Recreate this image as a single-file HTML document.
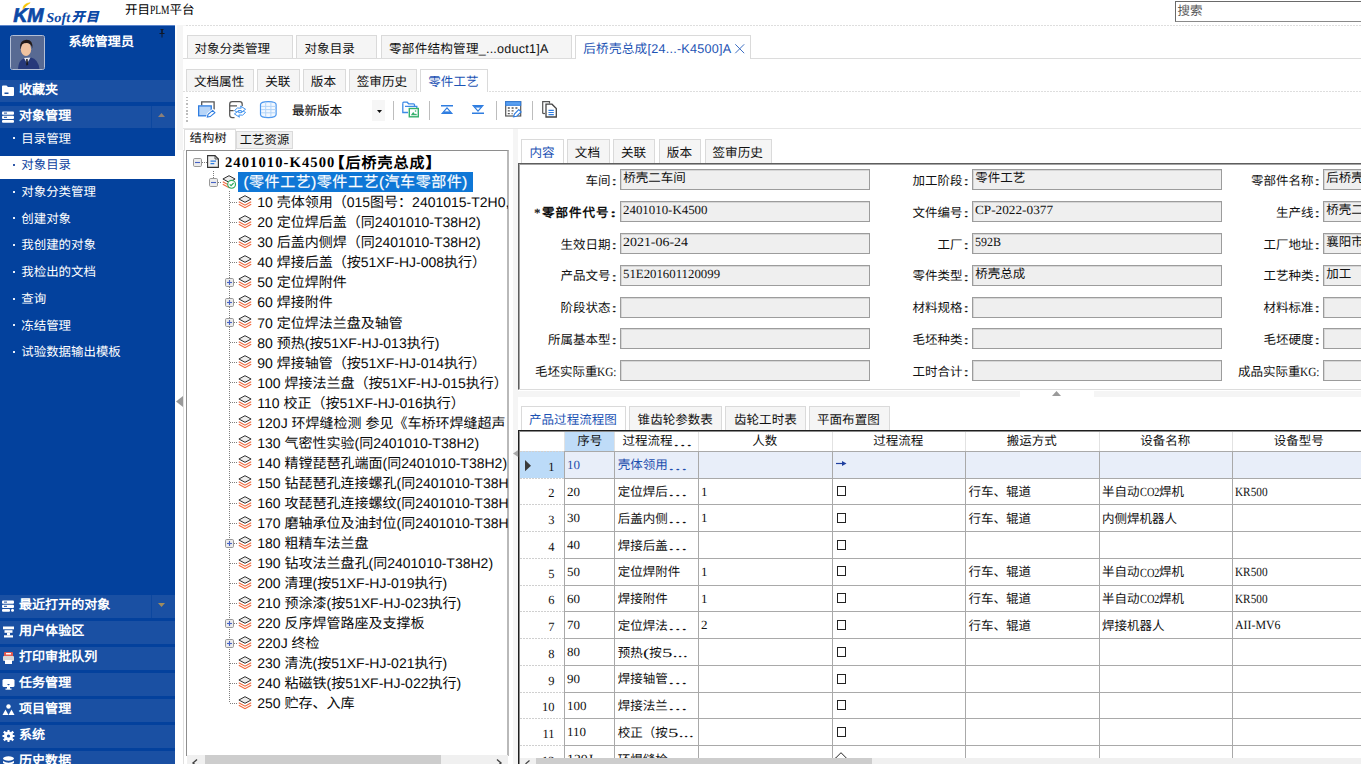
<!DOCTYPE html>
<html lang="zh-CN"><head><meta charset="utf-8"><title>开目PLM平台</title><style>
html,body{margin:0;padding:0;width:1361px;height:764px;overflow:hidden;}
#app{position:absolute;left:0;top:0;width:1361px;height:764px;overflow:hidden;background:#fff;}
body{background:#fff;position:relative;font-family:"Liberation Sans",sans-serif;color:#000;text-rendering:geometricPrecision;}
.a{position:absolute;white-space:nowrap;line-height:1;}
.b{position:absolute;box-sizing:border-box;}
.ser{font-family:"Liberation Sans",sans-serif;}
.lat{font-family:"Liberation Serif","Liberation Sans",serif;}
.nx{font-family:"Liberation Serif","Liberation Sans",serif;display:inline-block;transform-origin:0 50%;position:relative;top:0.3px;}
.sb{color:#fff;font-size:12.45px;}
.sbh{color:#fff;font-size:13px;font-weight:bold;}
.tab{position:absolute;box-sizing:border-box;background:#f5f5f5;border:1px solid #dadada;border-bottom:none;}
.inp{position:absolute;box-sizing:border-box;background:#efefef;border:1px solid #9c9c9c;box-shadow:inset 1px 1px 0 #d6d6d6;}
svg{position:absolute;overflow:visible;}
</style></head><body><div id="app">
<div class="b" style="left:183px;top:25px;width:1178px;height:1px;background:repeating-linear-gradient(90deg,#dedede 0 2px,transparent 2px 3px)"></div>
<svg style="left:12px;top:0px" width="92" height="24" viewBox="0 0 92 24"><path d="M18.2 2.7 Q10.6 3.6 10.9 9.6 Q13.8 5.6 18.2 2.7Z" fill="#f7c500" stroke="#f7c500" stroke-width="0.6"/><text x="1.2" y="21.8" font-family="Liberation Sans" font-weight="bold" font-style="italic" font-size="20" fill="#0c49a6" stroke="#0c49a6" stroke-width="0.7" textLength="30.5" lengthAdjust="spacingAndGlyphs">KM</text><text x="34.3" y="21.8" font-family="Liberation Serif" font-weight="bold" font-style="italic" font-size="13.5" fill="#0c49a6" textLength="24" lengthAdjust="spacingAndGlyphs">Soft</text><text x="60" y="21.3" font-family="Liberation Sans" font-weight="bold" font-style="italic" font-size="12.5" fill="#0c49a6" stroke="#0c49a6" stroke-width="0.3" textLength="26.5" lengthAdjust="spacing">开目</text></svg>
<div class="a ser" style="left:125.00px;top:3.55px;font-size:12.5px;">开目<span class="nx" style="transform:scaleX(0.759);margin-right:-6.20px">PLM</span>平台</div>
<div class="b" style="left:1175px;top:1px;width:190px;height:21px;border:1px solid #6a6a6a;border-bottom-color:#8a8a8a;background:#fff"></div>
<div class="a " style="left:1177.50px;top:4.65px;font-size:12.5px;color:#5a5a5a">搜索</div>
<div class="b" style="left:0px;top:25px;width:175px;height:739px;background:#03419d"></div>
<div class="b" style="left:0px;top:25px;width:175px;height:1px;background:#5d86cb"></div>
<div class="b" style="left:10px;top:35px;width:35px;height:35px;background:#5a6b94;border:1px solid #b4bfd6;border-radius:2.5px"></div>
<svg style="left:11px;top:36px" width="33" height="33" viewBox="0 0 33 33"><rect width="33" height="33" rx="1.5" fill="#586a93"/><path d="M7 33 Q7.5 24 13 22.5 L20 21.5 Q27 23 28.5 33Z" fill="#27397a"/><path d="M13 22 L16 27.5 L19.5 21.5Z" fill="#e9e9f0"/><path d="M15.2 23 L16.6 23 L17.2 29 L15.2 29.5Z" fill="#1a1a22"/><ellipse cx="15" cy="13.2" rx="5.2" ry="6.9" fill="#efc3a0"/><path d="M9.3 12 Q8.5 4.2 15.5 3.8 Q22.3 4 21.3 12.5 Q20.5 8 17.5 7.2 Q13 6.8 11 8.5 Q10 10 9.8 13.5Z" fill="#231a17"/></svg>
<div class="a sbh" style="left:68.50px;top:34.72px;font-size:13px;letter-spacing:0.1px">系统管理员</div>
<svg style="left:159px;top:29px" width="6" height="9" viewBox="0 0 6 9"><path d="M1.5 0h3v1h-.7v3h1.7v1h-5v-1h1.7v-3h-.7zM2.5 5h1v3.5h-1z" fill="#101828"/></svg>
<div class="b" style="left:0px;top:80px;width:175px;height:22px;background:#1a50a3"></div>
<svg style="left:1.6px;top:84px" width="13" height="13" viewBox="0 0 13 13"><path d="M0 2.5Q0 1.5 1 1.5H4.5L6 3H11Q12 3 12 4V11Q12 12 11 12H1Q0 12 0 11Z" fill="#fff"/><rect x="2.5" y="8.5" width="4" height="1.5" fill="#1a50a3"/></svg>
<div class="a sbh" style="left:19.00px;top:82.82px;font-size:13px;letter-spacing:0.05px">收藏夹</div>
<div class="b" style="left:0px;top:105.5px;width:175px;height:22.5px;background:#1a50a3"></div>
<div class="b" style="left:151px;top:105.5px;width:1px;height:22.5px;background:#03419d;opacity:.6"></div>
<svg style="left:158px;top:112.8px" width="7" height="4" viewBox="0 0 7 4"><path d="M0 4L3.5 0L7 4Z" fill="#8c8078"/></svg>
<svg style="left:1.6px;top:109.5px" width="13" height="13" viewBox="0 0 13 13"><rect x="0" y="1.5" width="12" height="3.2" rx="1" fill="#fff"/><rect x="0" y="5.7" width="12" height="3.2" rx="1" fill="#fff"/><rect x="0" y="9.9" width="12" height="2.8" rx="1" fill="#fff"/><rect x="2" y="2.6" width="3" height="1" fill="#1a50a3"/><rect x="2" y="6.8" width="3" height="1" fill="#1a50a3"/></svg>
<div class="a sbh" style="left:19.00px;top:108.57px;font-size:13px;letter-spacing:0.05px">对象管理</div>
<div class="b" style="left:13px;top:137px;width:2px;height:2px;background:#e8eefa"></div>
<div class="a sb" style="left:21.30px;top:132.57px;font-size:12.45px;">目录管理</div>
<div class="b" style="left:0px;top:156px;width:175px;height:23px;background:#fff"></div>
<div class="b" style="left:13px;top:164px;width:2px;height:2px;background:#3058a8"></div>
<div class="a sb" style="left:21.30px;top:159.29px;font-size:12.45px;color:#0d3f9e;">对象目录</div>
<div class="b" style="left:13px;top:191px;width:2px;height:2px;background:#e8eefa"></div>
<div class="a sb" style="left:21.30px;top:186.01px;font-size:12.45px;">对象分类管理</div>
<div class="b" style="left:13px;top:217px;width:2px;height:2px;background:#e8eefa"></div>
<div class="a sb" style="left:21.30px;top:212.73px;font-size:12.45px;">创建对象</div>
<div class="b" style="left:13px;top:244px;width:2px;height:2px;background:#e8eefa"></div>
<div class="a sb" style="left:21.30px;top:239.45px;font-size:12.45px;">我创建的对象</div>
<div class="b" style="left:13px;top:271px;width:2px;height:2px;background:#e8eefa"></div>
<div class="a sb" style="left:21.30px;top:266.17px;font-size:12.45px;">我检出的文档</div>
<div class="b" style="left:13px;top:298px;width:2px;height:2px;background:#e8eefa"></div>
<div class="a sb" style="left:21.30px;top:292.89px;font-size:12.45px;">查询</div>
<div class="b" style="left:13px;top:324px;width:2px;height:2px;background:#e8eefa"></div>
<div class="a sb" style="left:21.30px;top:319.61px;font-size:12.45px;">冻结管理</div>
<div class="b" style="left:13px;top:351px;width:2px;height:2px;background:#e8eefa"></div>
<div class="a sb" style="left:21.30px;top:346.33px;font-size:12.45px;">试验数据输出模板</div>
<div class="b" style="left:0px;top:595px;width:175px;height:23px;background:#1a50a3"></div>
<div class="b" style="left:151px;top:595px;width:1px;height:23px;background:#03419d;opacity:.6"></div>
<svg style="left:158px;top:603px" width="7" height="4" viewBox="0 0 7 4"><path d="M0 0L3.5 4L7 0Z" fill="#a08c5e"/></svg>
<svg style="left:1.6px;top:599px" width="13" height="13" viewBox="0 0 13 13"><rect x="0" y="1.5" width="12" height="3.2" rx="1" fill="#fff"/><rect x="0" y="5.7" width="12" height="3.2" rx="1" fill="#fff"/><rect x="0" y="9.9" width="8" height="2.8" rx="1" fill="#fff"/><circle cx="10.5" cy="11.2" r="1.5" fill="#fff"/><rect x="2" y="2.6" width="3" height="1" fill="#1a50a3"/><rect x="2" y="6.8" width="3" height="1" fill="#1a50a3"/></svg>
<div class="a sbh" style="left:19.00px;top:598.32px;font-size:13px;letter-spacing:0.05px">最近打开的对象</div>
<div class="b" style="left:0px;top:621px;width:175px;height:23px;background:#1a50a3"></div>
<svg style="left:1.6px;top:625px" width="13" height="13" viewBox="0 0 13 13"><rect x="1" y="1.5" width="11" height="2.8" fill="#fff"/><rect x="2.5" y="5.2" width="8" height="2.6" fill="#fff"/><rect x="5" y="7.8" width="3" height="2.5" fill="#fff"/><rect x="2" y="10.3" width="9" height="2.2" fill="#fff"/></svg>
<div class="a sbh" style="left:19.00px;top:624.32px;font-size:13px;letter-spacing:0.05px">用户体验区</div>
<div class="b" style="left:0px;top:647px;width:175px;height:23px;background:#1a50a3"></div>
<svg style="left:1.6px;top:651px" width="13" height="13" viewBox="0 0 13 13"><rect x="2" y="1" width="9" height="5" rx="1" fill="#e05a50"/><rect x="1" y="5" width="11" height="5" rx="1" fill="#d8d8d8"/><rect x="3" y="9" width="7" height="4" fill="#fff"/><rect x="4" y="2" width="5" height="1.5" fill="#fff"/></svg>
<div class="a sbh" style="left:19.00px;top:650.32px;font-size:13px;letter-spacing:0.05px">打印审批队列</div>
<div class="b" style="left:0px;top:673px;width:175px;height:23px;background:#1a50a3"></div>
<svg style="left:1.6px;top:677px" width="13" height="13" viewBox="0 0 13 13"><rect x="0.5" y="2" width="12" height="8" rx="1.5" fill="#fff"/><rect x="5" y="10" width="3" height="2" fill="#fff"/><rect x="3.5" y="11.5" width="6" height="1.2" fill="#fff"/><path d="M5 7L6.5 8.5L8 7Z" fill="#1a50a3"/></svg>
<div class="a sbh" style="left:19.00px;top:676.32px;font-size:13px;letter-spacing:0.05px">任务管理</div>
<div class="b" style="left:0px;top:699px;width:175px;height:23px;background:#1a50a3"></div>
<svg style="left:1.6px;top:703px" width="13" height="13" viewBox="0 0 13 13"><circle cx="6.5" cy="3.5" r="2.2" fill="#fff"/><path d="M0.5 12L3.5 6.5L6.5 12Z" fill="#fff"/><path d="M6.5 12L9.5 6.5L12.5 12Z" fill="#fff"/></svg>
<div class="a sbh" style="left:19.00px;top:702.32px;font-size:13px;letter-spacing:0.05px">项目管理</div>
<div class="b" style="left:0px;top:725px;width:175px;height:23px;background:#1a50a3"></div>
<svg style="left:1.6px;top:729px" width="13" height="13" viewBox="0 0 13 13"><circle cx="6.5" cy="7" r="4.6" fill="#fff"/><circle cx="6.5" cy="7" r="1.6" fill="#1a50a3"/><g fill="#fff"><rect x="5.5" y="1" width="2" height="2.5"/><rect x="5.5" y="10.5" width="2" height="2.5"/><rect x="0.5" y="6" width="2.5" height="2"/><rect x="10" y="6" width="2.5" height="2"/><rect x="1.5" y="2.2" width="2.4" height="2.4" transform="rotate(45 2.7 3.4)"/><rect x="9.2" y="2.2" width="2.4" height="2.4" transform="rotate(45 10.4 3.4)"/><rect x="1.5" y="9.4" width="2.4" height="2.4" transform="rotate(45 2.7 10.6)"/><rect x="9.2" y="9.4" width="2.4" height="2.4" transform="rotate(45 10.4 10.6)"/></g></svg>
<div class="a sbh" style="left:19.00px;top:728.32px;font-size:13px;letter-spacing:0.05px">系统</div>
<div class="b" style="left:0px;top:751px;width:175px;height:23px;background:#1a50a3"></div>
<svg style="left:1.6px;top:755px" width="13" height="13" viewBox="0 0 13 13"><ellipse cx="6.5" cy="3.5" rx="5.5" ry="2.2" fill="#fff"/><path d="M1 6Q6.5 9.5 12 6V8Q6.5 11.5 1 8Z" fill="#fff"/><path d="M1 10Q6.5 13.5 12 10V12Q6.5 15.5 1 12Z" fill="#fff"/></svg>
<div class="a sbh" style="left:19.00px;top:754.32px;font-size:13px;letter-spacing:0.05px">历史数据</div>
<div class="b" style="left:175px;top:25px;width:11px;height:125px;background:#f5f5f5"></div>
<div class="b" style="left:175px;top:25px;width:2px;height:125px;background:#fdfdfd"></div>
<div class="b" style="left:175px;top:150px;width:11px;height:614px;background:#fff"></div>
<svg style="left:176px;top:396px" width="7" height="11" viewBox="0 0 7 11"><path d="M7 0L0 5.5L7 11Z" fill="#999"/></svg>
<div class="b" style="left:183px;top:26px;width:1178px;height:738px;background:#fff"></div>
<div class="b" style="left:183px;top:150px;width:1px;height:614px;background:#e0e0e0"></div>
<div class="b" style="left:183px;top:58px;width:1178px;height:1px;background:#dcdcdc"></div>
<div class="tab" style="left:187px;top:35px;width:106px;height:23px;"></div>
<div class="a " style="left:194.50px;top:42.80px;font-size:12.6px;color:#111">对象分类管理</div>
<div class="tab" style="left:296px;top:35px;width:81px;height:23px;"></div>
<div class="a " style="left:304.50px;top:42.80px;font-size:12.6px;color:#111">对象目录</div>
<div class="tab" style="left:381px;top:35px;width:191px;height:23px;"></div>
<div class="a " style="left:389.00px;top:42.80px;font-size:12.6px;color:#111;letter-spacing:0.22px">零部件结构管理_...oduct1]A</div>
<div class="tab" style="left:575px;top:35px;width:176px;height:24px;background:#fff;"></div>
<div class="a " style="left:583.20px;top:42.80px;font-size:12.6px;color:#1d53b4;letter-spacing:0.25px">后桥壳总成[24...-K4500]A</div>
<svg style="left:735px;top:43.8px" width="9.5" height="9.5" viewBox="0 0 9.5 9.5"><path d="M0.3 0.3L9.2 9.2M9.2 0.3L0.3 9.2" stroke="#3d6fc4" stroke-width="1" fill="none"/></svg>
<div class="b" style="left:183px;top:91px;width:1178px;height:1px;background:repeating-linear-gradient(90deg,#dedede 0 2px,transparent 2px 3px)"></div>
<div class="tab" style="left:186px;top:69px;width:68px;height:22px;"></div>
<div class="a " style="left:193.90px;top:76.00px;font-size:12.6px;color:#111">文档属性</div>
<div class="tab" style="left:257px;top:69px;width:43px;height:22px;"></div>
<div class="a " style="left:265.20px;top:76.00px;font-size:12.6px;color:#111">关联</div>
<div class="tab" style="left:303px;top:69px;width:43px;height:22px;"></div>
<div class="a " style="left:310.80px;top:76.00px;font-size:12.6px;color:#111">版本</div>
<div class="tab" style="left:349px;top:69px;width:68px;height:22px;"></div>
<div class="a " style="left:356.70px;top:76.00px;font-size:12.6px;color:#111">签审历史</div>
<div class="tab" style="left:420px;top:69px;width:68px;height:23px;background:#fff;"></div>
<div class="a " style="left:428.20px;top:76.00px;font-size:12.6px;color:#1d53b4">零件工艺</div>
<div class="b" style="left:186px;top:96.6px;width:2px;height:1.6px;background:#bdbdbd"></div>
<div class="b" style="left:186px;top:99.9px;width:2px;height:1.6px;background:#bdbdbd"></div>
<div class="b" style="left:186px;top:103.3px;width:2px;height:1.6px;background:#bdbdbd"></div>
<div class="b" style="left:186px;top:106.6px;width:2px;height:1.6px;background:#bdbdbd"></div>
<div class="b" style="left:186px;top:110.0px;width:2px;height:1.6px;background:#bdbdbd"></div>
<div class="b" style="left:186px;top:113.3px;width:2px;height:1.6px;background:#bdbdbd"></div>
<div class="b" style="left:186px;top:116.7px;width:2px;height:1.6px;background:#bdbdbd"></div>
<div class="b" style="left:186px;top:120.0px;width:2px;height:1.6px;background:#bdbdbd"></div>
<svg style="left:198px;top:101px" width="17" height="17" viewBox="0 0 17 17"><path d="M3.7 4.4V0.9H16.1V8.6" fill="none" stroke="#555" stroke-width="1.3"/><rect x="0.65" y="4.9" width="12.6" height="9.9" fill="#b7d5f8" stroke="#2f7de0" stroke-width="1.3"/><path d="M8.6 17L9.6 13L14.8 8.6L17.6 11.6L12.5 16Z" fill="#fff" stroke="#fff" stroke-width="1.6"/><path d="M9.3 16.1L10.1 13.4L14.7 9.4L16.9 11.7L12.2 15.6Z" fill="#fff" stroke="#2f7de0" stroke-width="1.1"/></svg>
<svg style="left:229px;top:101px" width="17" height="17" viewBox="0 0 17 17"><path d="M0.7 3.2Q0.7 0.7 3.2 0.7H10.7Q13.2 0.7 13.2 3.2V5M0.7 3.2V14Q0.7 16.5 3.2 16.5H5.5" fill="none" stroke="#555" stroke-width="1.25"/><path d="M0.7 4.8H8M0.7 9.6H4.6" fill="none" stroke="#555" stroke-width="1.2"/><circle cx="11" cy="10.8" r="5.6" fill="#fff"/><path d="M5.4 9.6Q8 5.6 12.2 7.2L11.6 5L16.6 8.3L12.2 11.4L12.4 9.6Q9.8 8.7 7.8 10.9Z" fill="#fff" stroke="#4293ee" stroke-width="1"/><path d="M16.6 11.4Q14 15.6 9.8 14L10.4 16.2L5.4 12.9L9.8 9.8L9.6 11.6Q12.2 12.5 14.2 10.3Z" fill="#fff" stroke="#4293ee" stroke-width="1"/></svg>
<svg style="left:260px;top:101px" width="17" height="17" viewBox="0 0 17 17"><path d="M0.5 3.6Q0.5 0.6 8.3 0.6Q16.1 0.6 16.1 3.6V13.6Q16.1 16.6 8.3 16.6Q0.5 16.6 0.5 13.6Z" fill="#f2f8ff" stroke="#4a96ee" stroke-width="1.2"/><path d="M1 5.4H15.6M1 8.6H15.6M1 11.8H15.6M5.7 1V16.2M10.9 1V16.2" stroke="#b3d4f8" stroke-width="1" fill="none"/></svg>
<div class="a " style="left:291.90px;top:105.23px;font-size:12.55px;color:#111;-webkit-text-stroke:0.1px #111">最新版本</div>
<div class="b" style="left:372px;top:100px;width:13px;height:21px;background:#f6f6f6"></div>
<svg style="left:376.7px;top:109.5px" width="5" height="3" viewBox="0 0 5 3"><path d="M0 0H5L2.5 3Z" fill="#111"/></svg>
<div class="b" style="left:393px;top:101px;width:1px;height:19px;background:#bdbdbd"></div>
<svg style="left:402px;top:101px" width="17" height="17" viewBox="0 0 17 17"><path d="M0.8 2.2Q0.8 1.2 1.8 1.2H5.2L6.6 2.8H11.5Q12.5 2.8 12.5 3.8V5" fill="none" stroke="#3d8ae6" stroke-width="1.3"/><path d="M0.8 2.2V11.5H6" fill="none" stroke="#3d8ae6" stroke-width="1.3"/><path d="M3 5.3H14.8V7" fill="none" stroke="#3d8ae6" stroke-width="1.3"/><rect x="7.3" y="7.5" width="9" height="8.3" fill="#fff" stroke="#35b06c" stroke-width="1.4"/><path d="M8.8 14.3L11.2 11L13 13.3L14 12.4L15.2 14.3Z" fill="#35b06c"/><circle cx="13.6" cy="10" r="0.8" fill="#35b06c"/></svg>
<div class="b" style="left:429px;top:101px;width:1px;height:19px;background:#bdbdbd"></div>
<svg style="left:440.5px;top:105px" width="12" height="9" viewBox="0 0 12 9"><rect x="0" y="0" width="12" height="1.5" fill="#2f7de0"/><path d="M6 2.8L10.8 8.3H1.2Z" fill="none" stroke="#2f7de0" stroke-width="1.2"/><rect x="2.5" y="6.4" width="7" height="2" fill="#2f7de0"/></svg>
<svg style="left:471.5px;top:105px" width="12" height="9" viewBox="0 0 12 9"><rect x="0" y="7.5" width="12" height="1.5" fill="#2f7de0"/><path d="M6 6.2L10.8 0.7H1.2Z" fill="none" stroke="#2f7de0" stroke-width="1.2"/><rect x="2.5" y="0.6" width="7" height="2" fill="#2f7de0"/></svg>
<div class="b" style="left:496px;top:101px;width:1px;height:19px;background:#bdbdbd"></div>
<svg style="left:505px;top:101px" width="17" height="17" viewBox="0 0 17 17"><rect x="0.7" y="0.7" width="15" height="14.3" fill="#fff" stroke="#555" stroke-width="1.2"/><rect x="0.7" y="0.7" width="15" height="3.6" fill="#5aa0f0" stroke="#2f7de0" stroke-width="1"/><path d="M2.8 7H4.8M6.6 7H8.6M10.4 7H12.4M2.8 9.8H4.8M6.6 9.8H8.6M2.8 12.6H4.8M6.6 12.6H7.6" stroke="#555" stroke-width="1.3"/><path d="M8.6 15.8L9.4 13.1L13.8 8.6L16.1 10.9L11.5 15.3Z" fill="#fff" stroke="#2f7de0" stroke-width="1.1"/></svg>
<div class="b" style="left:532px;top:101px;width:1px;height:19px;background:#bdbdbd"></div>
<svg style="left:542px;top:101px" width="16" height="17" viewBox="0 0 16 17"><path d="M0.7 12.5V0.7H7.5V2.5" fill="none" stroke="#555" stroke-width="1.2"/><path d="M0.7 12.5H3" fill="none" stroke="#555" stroke-width="1.2"/><path d="M4 3.2H10L14.3 7.5V16H4Z" fill="#fff" stroke="#444" stroke-width="1.3"/><path d="M6.5 9.3H11.8M6.5 11.5H11.8M6.5 13.7H11.8" stroke="#2f7de0" stroke-width="1.2"/></svg>
<div class="b" style="left:183px;top:128px;width:1178px;height:1px;background:#e6e6e6"></div>
<div class="b" style="left:184px;top:129px;width:52px;height:22px;background:#fff;border:1px solid #dedede;border-bottom:none"></div>
<div class="a " style="left:189.80px;top:132.48px;font-size:12px;letter-spacing:0.35px;color:#111">结构树</div>
<div class="b" style="left:236px;top:131px;width:57px;height:18px;background:#f0f0f0;border:1px solid #dadada"></div>
<div class="a " style="left:239.70px;top:134.34px;font-size:12.3px;letter-spacing:0.1px;color:#111">工艺资源</div>
<div class="b" style="left:186px;top:150px;width:323px;height:606px;border:1px solid #8e8e8e;border-right:2px solid #b9b9b9;border-bottom:none;background:#fff"></div>
<div class="b" style="left:512.5px;top:129px;width:5px;height:635px;background:#f5f5f5"></div>
<svg style="left:193px;top:157.5px" width="9" height="9" viewBox="0 0 9 9"><rect x="0.5" y="0.5" width="8" height="8" rx="1.2" fill="#ececec" stroke="#989898"/><path d="M2 4.5H7" stroke="#4662c4" stroke-width="1.1"/></svg>
<div class="b" style="left:202px;top:162px;width:5px;height:1px;background:repeating-linear-gradient(90deg,#7d7d7d 0 1px,transparent 1px 2px)"></div>
<svg style="left:207px;top:155px" width="12" height="13" viewBox="0 0 12 13"><path d="M0.6 0.6H8L11.4 4V12.4H0.6Z" fill="#f0f0f0" stroke="#333" stroke-width="1.1"/><path d="M8 0.6V4H11.4" fill="none" stroke="#333" stroke-width="0.8"/><path d="M3.5 6.2H9M3.5 8.6H7.3" stroke="#2f7de0" stroke-width="1.2"/></svg>
<div class="a lat" style="left:225.00px;top:156.30px;font-size:14.6px;font-weight:bold;letter-spacing:1.07px">2401010-K4500</div>
<div class="a " style="left:329.50px;top:155.50px;font-size:15px;font-weight:bold;letter-spacing:1px">【后桥壳总成】</div>
<div class="b" style="left:213px;top:171px;width:1px;height:7px;background:repeating-linear-gradient(180deg,#7d7d7d 0 1px,transparent 1px 2px)"></div>
<svg style="left:209px;top:177.5px" width="9" height="9" viewBox="0 0 9 9"><rect x="0.5" y="0.5" width="8" height="8" rx="1.2" fill="#ececec" stroke="#989898"/><path d="M2 4.5H7" stroke="#4662c4" stroke-width="1.1"/></svg>
<div class="b" style="left:218px;top:182px;width:4px;height:1px;background:repeating-linear-gradient(90deg,#7d7d7d 0 1px,transparent 1px 2px)"></div>
<svg style="left:222px;top:175px" width="14" height="14" viewBox="0 0 14 14"><path d="M0.8 6.8L7 10.2L13.2 6.8" fill="none" stroke="#f0683c" stroke-width="1.1"/><path d="M0.8 9.3L7 12.7L13.2 9.3" fill="none" stroke="#f0683c" stroke-width="1.1"/><path d="M7 0.7L0.9 4L7 7.3L13.1 4Z" fill="#ededed" stroke="#2e2e2e" stroke-width="1"/><circle cx="9.6" cy="9.3" r="3.9" fill="#fff" stroke="#2eab5f" stroke-width="1.15"/><path d="M7.7 9.3L9.1 10.7L11.6 8" fill="none" stroke="#2eab5f" stroke-width="1.15"/></svg>
<div class="b" style="left:238px;top:172px;width:235px;height:19.6px;background:#0f77d6"></div>
<div class="a " style="left:243.50px;top:174.90px;font-size:15px;color:#fff;letter-spacing:0.55px;-webkit-text-stroke:0.2px #fff">(零件工艺)零件工艺(汽车零部件)</div>
<div class="b" style="left:229px;top:191px;width:1px;height:512px;background:repeating-linear-gradient(180deg,#7d7d7d 0 1px,transparent 1px 2px)"></div>
<div class="b" style="left:187px;top:191px;width:320.5px;height:564px;overflow:hidden">
<div class="a" style="font-size:14px;left:70.30000000000001px;top:4.22px;color:#0a0a0a">10 壳体领用（015图号：2401015-T2H0,</div>
<div class="a" style="font-size:14px;left:70.30000000000001px;top:24.27px;color:#0a0a0a">20 定位焊后盖（同2401010-T38H2)</div>
<div class="a" style="font-size:14px;left:70.30000000000001px;top:44.32px;color:#0a0a0a">30 后盖内侧焊（同2401010-T38H2)</div>
<div class="a" style="font-size:14px;left:70.30000000000001px;top:64.37px;color:#0a0a0a">40 焊接后盖（按51XF-HJ-008执行）</div>
<div class="a" style="font-size:14px;left:70.30000000000001px;top:84.42px;color:#0a0a0a">50 定位焊附件</div>
<div class="a" style="font-size:14px;left:70.30000000000001px;top:104.47px;color:#0a0a0a">60 焊接附件</div>
<div class="a" style="font-size:14px;left:70.30000000000001px;top:124.52px;color:#0a0a0a">70 定位焊法兰盘及轴管</div>
<div class="a" style="font-size:14px;left:70.30000000000001px;top:144.57px;color:#0a0a0a">80 预热(按51XF-HJ-013执行)</div>
<div class="a" style="font-size:14px;left:70.30000000000001px;top:164.62px;color:#0a0a0a">90 焊接轴管（按51XF-HJ-014执行）</div>
<div class="a" style="font-size:14px;left:70.30000000000001px;top:184.67px;color:#0a0a0a">100 焊接法兰盘（按51XF-HJ-015执行）</div>
<div class="a" style="font-size:14px;left:70.30000000000001px;top:204.72px;color:#0a0a0a">110 校正（按51XF-HJ-016执行）</div>
<div class="a" style="font-size:14px;left:70.30000000000001px;top:224.77px;color:#0a0a0a">120J 环焊缝检测 参见《车桥环焊缝超声</div>
<div class="a" style="font-size:14px;left:70.30000000000001px;top:244.82px;color:#0a0a0a">130 气密性实验(同2401010-T38H2)</div>
<div class="a" style="font-size:14px;left:70.30000000000001px;top:264.87px;color:#0a0a0a">140 精镗琵琶孔端面(同2401010-T38H2)</div>
<div class="a" style="font-size:14px;left:70.30000000000001px;top:284.92px;color:#0a0a0a">150 钻琵琶孔连接螺孔(同2401010-T38H</div>
<div class="a" style="font-size:14px;left:70.30000000000001px;top:304.97px;color:#0a0a0a">160 攻琵琶孔连接螺纹(同2401010-T38H</div>
<div class="a" style="font-size:14px;left:70.30000000000001px;top:325.02px;color:#0a0a0a">170 磨轴承位及油封位(同2401010-T38H</div>
<div class="a" style="font-size:14px;left:70.30000000000001px;top:345.07px;color:#0a0a0a">180 粗精车法兰盘</div>
<div class="a" style="font-size:14px;left:70.30000000000001px;top:365.12px;color:#0a0a0a">190 钻攻法兰盘孔(同2401010-T38H2)</div>
<div class="a" style="font-size:14px;left:70.30000000000001px;top:385.17px;color:#0a0a0a">200 清理(按51XF-HJ-019执行)</div>
<div class="a" style="font-size:14px;left:70.30000000000001px;top:405.22px;color:#0a0a0a">210 预涂漆(按51XF-HJ-023执行)</div>
<div class="a" style="font-size:14px;left:70.30000000000001px;top:425.27px;color:#0a0a0a">220 反序焊管路座及支撑板</div>
<div class="a" style="font-size:14px;left:70.30000000000001px;top:445.32px;color:#0a0a0a">220J 终检</div>
<div class="a" style="font-size:14px;left:70.30000000000001px;top:465.37px;color:#0a0a0a">230 清洗(按51XF-HJ-021执行)</div>
<div class="a" style="font-size:14px;left:70.30000000000001px;top:485.42px;color:#0a0a0a">240 粘磁铁(按51XF-HJ-022执行)</div>
<div class="a" style="font-size:14px;left:70.30000000000001px;top:505.47px;color:#0a0a0a">250 贮存、入库</div>
</div>
<div class="b" style="left:230px;top:202px;width:8px;height:1px;background:repeating-linear-gradient(90deg,#7d7d7d 0 1px,transparent 1px 2px)"></div>
<svg style="left:237.6px;top:195px" width="14" height="14" viewBox="0 0 14 14"><path d="M0.8 6.8L7 10.2L13.2 6.8" fill="none" stroke="#f0683c" stroke-width="1.1"/><path d="M0.8 9.3L7 12.7L13.2 9.3" fill="none" stroke="#f0683c" stroke-width="1.1"/><path d="M7 0.7L0.9 4L7 7.3L13.1 4Z" fill="#ededed" stroke="#2e2e2e" stroke-width="1"/></svg>
<div class="b" style="left:230px;top:222px;width:8px;height:1px;background:repeating-linear-gradient(90deg,#7d7d7d 0 1px,transparent 1px 2px)"></div>
<svg style="left:237.6px;top:215px" width="14" height="14" viewBox="0 0 14 14"><path d="M0.8 6.8L7 10.2L13.2 6.8" fill="none" stroke="#f0683c" stroke-width="1.1"/><path d="M0.8 9.3L7 12.7L13.2 9.3" fill="none" stroke="#f0683c" stroke-width="1.1"/><path d="M7 0.7L0.9 4L7 7.3L13.1 4Z" fill="#ededed" stroke="#2e2e2e" stroke-width="1"/></svg>
<div class="b" style="left:230px;top:242px;width:8px;height:1px;background:repeating-linear-gradient(90deg,#7d7d7d 0 1px,transparent 1px 2px)"></div>
<svg style="left:237.6px;top:235px" width="14" height="14" viewBox="0 0 14 14"><path d="M0.8 6.8L7 10.2L13.2 6.8" fill="none" stroke="#f0683c" stroke-width="1.1"/><path d="M0.8 9.3L7 12.7L13.2 9.3" fill="none" stroke="#f0683c" stroke-width="1.1"/><path d="M7 0.7L0.9 4L7 7.3L13.1 4Z" fill="#ededed" stroke="#2e2e2e" stroke-width="1"/></svg>
<div class="b" style="left:230px;top:262px;width:8px;height:1px;background:repeating-linear-gradient(90deg,#7d7d7d 0 1px,transparent 1px 2px)"></div>
<svg style="left:237.6px;top:255px" width="14" height="14" viewBox="0 0 14 14"><path d="M0.8 6.8L7 10.2L13.2 6.8" fill="none" stroke="#f0683c" stroke-width="1.1"/><path d="M0.8 9.3L7 12.7L13.2 9.3" fill="none" stroke="#f0683c" stroke-width="1.1"/><path d="M7 0.7L0.9 4L7 7.3L13.1 4Z" fill="#ededed" stroke="#2e2e2e" stroke-width="1"/></svg>
<svg style="left:225px;top:277.5px" width="9" height="9" viewBox="0 0 9 9"><rect x="0.5" y="0.5" width="8" height="8" rx="1.2" fill="#ececec" stroke="#989898"/><path d="M2 4.5H7" stroke="#4662c4" stroke-width="1.1"/><path d="M4.5 2V7" stroke="#4662c4" stroke-width="1.1"/></svg>
<div class="b" style="left:234px;top:282px;width:4px;height:1px;background:repeating-linear-gradient(90deg,#7d7d7d 0 1px,transparent 1px 2px)"></div>
<svg style="left:237.6px;top:275px" width="14" height="14" viewBox="0 0 14 14"><path d="M0.8 6.8L7 10.2L13.2 6.8" fill="none" stroke="#f0683c" stroke-width="1.1"/><path d="M0.8 9.3L7 12.7L13.2 9.3" fill="none" stroke="#f0683c" stroke-width="1.1"/><path d="M7 0.7L0.9 4L7 7.3L13.1 4Z" fill="#ededed" stroke="#2e2e2e" stroke-width="1"/></svg>
<svg style="left:225px;top:297.5px" width="9" height="9" viewBox="0 0 9 9"><rect x="0.5" y="0.5" width="8" height="8" rx="1.2" fill="#ececec" stroke="#989898"/><path d="M2 4.5H7" stroke="#4662c4" stroke-width="1.1"/><path d="M4.5 2V7" stroke="#4662c4" stroke-width="1.1"/></svg>
<div class="b" style="left:234px;top:302px;width:4px;height:1px;background:repeating-linear-gradient(90deg,#7d7d7d 0 1px,transparent 1px 2px)"></div>
<svg style="left:237.6px;top:295px" width="14" height="14" viewBox="0 0 14 14"><path d="M0.8 6.8L7 10.2L13.2 6.8" fill="none" stroke="#f0683c" stroke-width="1.1"/><path d="M0.8 9.3L7 12.7L13.2 9.3" fill="none" stroke="#f0683c" stroke-width="1.1"/><path d="M7 0.7L0.9 4L7 7.3L13.1 4Z" fill="#ededed" stroke="#2e2e2e" stroke-width="1"/></svg>
<svg style="left:225px;top:317.5px" width="9" height="9" viewBox="0 0 9 9"><rect x="0.5" y="0.5" width="8" height="8" rx="1.2" fill="#ececec" stroke="#989898"/><path d="M2 4.5H7" stroke="#4662c4" stroke-width="1.1"/><path d="M4.5 2V7" stroke="#4662c4" stroke-width="1.1"/></svg>
<div class="b" style="left:234px;top:322px;width:4px;height:1px;background:repeating-linear-gradient(90deg,#7d7d7d 0 1px,transparent 1px 2px)"></div>
<svg style="left:237.6px;top:315px" width="14" height="14" viewBox="0 0 14 14"><path d="M0.8 6.8L7 10.2L13.2 6.8" fill="none" stroke="#f0683c" stroke-width="1.1"/><path d="M0.8 9.3L7 12.7L13.2 9.3" fill="none" stroke="#f0683c" stroke-width="1.1"/><path d="M7 0.7L0.9 4L7 7.3L13.1 4Z" fill="#ededed" stroke="#2e2e2e" stroke-width="1"/></svg>
<div class="b" style="left:230px;top:342px;width:8px;height:1px;background:repeating-linear-gradient(90deg,#7d7d7d 0 1px,transparent 1px 2px)"></div>
<svg style="left:237.6px;top:335px" width="14" height="14" viewBox="0 0 14 14"><path d="M0.8 6.8L7 10.2L13.2 6.8" fill="none" stroke="#f0683c" stroke-width="1.1"/><path d="M0.8 9.3L7 12.7L13.2 9.3" fill="none" stroke="#f0683c" stroke-width="1.1"/><path d="M7 0.7L0.9 4L7 7.3L13.1 4Z" fill="#ededed" stroke="#2e2e2e" stroke-width="1"/></svg>
<div class="b" style="left:230px;top:362px;width:8px;height:1px;background:repeating-linear-gradient(90deg,#7d7d7d 0 1px,transparent 1px 2px)"></div>
<svg style="left:237.6px;top:355px" width="14" height="14" viewBox="0 0 14 14"><path d="M0.8 6.8L7 10.2L13.2 6.8" fill="none" stroke="#f0683c" stroke-width="1.1"/><path d="M0.8 9.3L7 12.7L13.2 9.3" fill="none" stroke="#f0683c" stroke-width="1.1"/><path d="M7 0.7L0.9 4L7 7.3L13.1 4Z" fill="#ededed" stroke="#2e2e2e" stroke-width="1"/></svg>
<div class="b" style="left:230px;top:382px;width:8px;height:1px;background:repeating-linear-gradient(90deg,#7d7d7d 0 1px,transparent 1px 2px)"></div>
<svg style="left:237.6px;top:375px" width="14" height="14" viewBox="0 0 14 14"><path d="M0.8 6.8L7 10.2L13.2 6.8" fill="none" stroke="#f0683c" stroke-width="1.1"/><path d="M0.8 9.3L7 12.7L13.2 9.3" fill="none" stroke="#f0683c" stroke-width="1.1"/><path d="M7 0.7L0.9 4L7 7.3L13.1 4Z" fill="#ededed" stroke="#2e2e2e" stroke-width="1"/></svg>
<div class="b" style="left:230px;top:402px;width:8px;height:1px;background:repeating-linear-gradient(90deg,#7d7d7d 0 1px,transparent 1px 2px)"></div>
<svg style="left:237.6px;top:395px" width="14" height="14" viewBox="0 0 14 14"><path d="M0.8 6.8L7 10.2L13.2 6.8" fill="none" stroke="#f0683c" stroke-width="1.1"/><path d="M0.8 9.3L7 12.7L13.2 9.3" fill="none" stroke="#f0683c" stroke-width="1.1"/><path d="M7 0.7L0.9 4L7 7.3L13.1 4Z" fill="#ededed" stroke="#2e2e2e" stroke-width="1"/></svg>
<div class="b" style="left:230px;top:422px;width:8px;height:1px;background:repeating-linear-gradient(90deg,#7d7d7d 0 1px,transparent 1px 2px)"></div>
<svg style="left:237.6px;top:415px" width="14" height="14" viewBox="0 0 14 14"><path d="M0.8 6.8L7 10.2L13.2 6.8" fill="none" stroke="#f0683c" stroke-width="1.1"/><path d="M0.8 9.3L7 12.7L13.2 9.3" fill="none" stroke="#f0683c" stroke-width="1.1"/><path d="M7 0.7L0.9 4L7 7.3L13.1 4Z" fill="#ededed" stroke="#2e2e2e" stroke-width="1"/></svg>
<div class="b" style="left:230px;top:442px;width:8px;height:1px;background:repeating-linear-gradient(90deg,#7d7d7d 0 1px,transparent 1px 2px)"></div>
<svg style="left:237.6px;top:435px" width="14" height="14" viewBox="0 0 14 14"><path d="M0.8 6.8L7 10.2L13.2 6.8" fill="none" stroke="#f0683c" stroke-width="1.1"/><path d="M0.8 9.3L7 12.7L13.2 9.3" fill="none" stroke="#f0683c" stroke-width="1.1"/><path d="M7 0.7L0.9 4L7 7.3L13.1 4Z" fill="#ededed" stroke="#2e2e2e" stroke-width="1"/></svg>
<div class="b" style="left:230px;top:462px;width:8px;height:1px;background:repeating-linear-gradient(90deg,#7d7d7d 0 1px,transparent 1px 2px)"></div>
<svg style="left:237.6px;top:455px" width="14" height="14" viewBox="0 0 14 14"><path d="M0.8 6.8L7 10.2L13.2 6.8" fill="none" stroke="#f0683c" stroke-width="1.1"/><path d="M0.8 9.3L7 12.7L13.2 9.3" fill="none" stroke="#f0683c" stroke-width="1.1"/><path d="M7 0.7L0.9 4L7 7.3L13.1 4Z" fill="#ededed" stroke="#2e2e2e" stroke-width="1"/></svg>
<div class="b" style="left:230px;top:482px;width:8px;height:1px;background:repeating-linear-gradient(90deg,#7d7d7d 0 1px,transparent 1px 2px)"></div>
<svg style="left:237.6px;top:475px" width="14" height="14" viewBox="0 0 14 14"><path d="M0.8 6.8L7 10.2L13.2 6.8" fill="none" stroke="#f0683c" stroke-width="1.1"/><path d="M0.8 9.3L7 12.7L13.2 9.3" fill="none" stroke="#f0683c" stroke-width="1.1"/><path d="M7 0.7L0.9 4L7 7.3L13.1 4Z" fill="#ededed" stroke="#2e2e2e" stroke-width="1"/></svg>
<div class="b" style="left:230px;top:503px;width:8px;height:1px;background:repeating-linear-gradient(90deg,#7d7d7d 0 1px,transparent 1px 2px)"></div>
<svg style="left:237.6px;top:496px" width="14" height="14" viewBox="0 0 14 14"><path d="M0.8 6.8L7 10.2L13.2 6.8" fill="none" stroke="#f0683c" stroke-width="1.1"/><path d="M0.8 9.3L7 12.7L13.2 9.3" fill="none" stroke="#f0683c" stroke-width="1.1"/><path d="M7 0.7L0.9 4L7 7.3L13.1 4Z" fill="#ededed" stroke="#2e2e2e" stroke-width="1"/></svg>
<div class="b" style="left:230px;top:523px;width:8px;height:1px;background:repeating-linear-gradient(90deg,#7d7d7d 0 1px,transparent 1px 2px)"></div>
<svg style="left:237.6px;top:516px" width="14" height="14" viewBox="0 0 14 14"><path d="M0.8 6.8L7 10.2L13.2 6.8" fill="none" stroke="#f0683c" stroke-width="1.1"/><path d="M0.8 9.3L7 12.7L13.2 9.3" fill="none" stroke="#f0683c" stroke-width="1.1"/><path d="M7 0.7L0.9 4L7 7.3L13.1 4Z" fill="#ededed" stroke="#2e2e2e" stroke-width="1"/></svg>
<svg style="left:225px;top:538.5px" width="9" height="9" viewBox="0 0 9 9"><rect x="0.5" y="0.5" width="8" height="8" rx="1.2" fill="#ececec" stroke="#989898"/><path d="M2 4.5H7" stroke="#4662c4" stroke-width="1.1"/><path d="M4.5 2V7" stroke="#4662c4" stroke-width="1.1"/></svg>
<div class="b" style="left:234px;top:543px;width:4px;height:1px;background:repeating-linear-gradient(90deg,#7d7d7d 0 1px,transparent 1px 2px)"></div>
<svg style="left:237.6px;top:536px" width="14" height="14" viewBox="0 0 14 14"><path d="M0.8 6.8L7 10.2L13.2 6.8" fill="none" stroke="#f0683c" stroke-width="1.1"/><path d="M0.8 9.3L7 12.7L13.2 9.3" fill="none" stroke="#f0683c" stroke-width="1.1"/><path d="M7 0.7L0.9 4L7 7.3L13.1 4Z" fill="#ededed" stroke="#2e2e2e" stroke-width="1"/></svg>
<div class="b" style="left:230px;top:563px;width:8px;height:1px;background:repeating-linear-gradient(90deg,#7d7d7d 0 1px,transparent 1px 2px)"></div>
<svg style="left:237.6px;top:556px" width="14" height="14" viewBox="0 0 14 14"><path d="M0.8 6.8L7 10.2L13.2 6.8" fill="none" stroke="#f0683c" stroke-width="1.1"/><path d="M0.8 9.3L7 12.7L13.2 9.3" fill="none" stroke="#f0683c" stroke-width="1.1"/><path d="M7 0.7L0.9 4L7 7.3L13.1 4Z" fill="#ededed" stroke="#2e2e2e" stroke-width="1"/></svg>
<div class="b" style="left:230px;top:583px;width:8px;height:1px;background:repeating-linear-gradient(90deg,#7d7d7d 0 1px,transparent 1px 2px)"></div>
<svg style="left:237.6px;top:576px" width="14" height="14" viewBox="0 0 14 14"><path d="M0.8 6.8L7 10.2L13.2 6.8" fill="none" stroke="#f0683c" stroke-width="1.1"/><path d="M0.8 9.3L7 12.7L13.2 9.3" fill="none" stroke="#f0683c" stroke-width="1.1"/><path d="M7 0.7L0.9 4L7 7.3L13.1 4Z" fill="#ededed" stroke="#2e2e2e" stroke-width="1"/></svg>
<div class="b" style="left:230px;top:603px;width:8px;height:1px;background:repeating-linear-gradient(90deg,#7d7d7d 0 1px,transparent 1px 2px)"></div>
<svg style="left:237.6px;top:596px" width="14" height="14" viewBox="0 0 14 14"><path d="M0.8 6.8L7 10.2L13.2 6.8" fill="none" stroke="#f0683c" stroke-width="1.1"/><path d="M0.8 9.3L7 12.7L13.2 9.3" fill="none" stroke="#f0683c" stroke-width="1.1"/><path d="M7 0.7L0.9 4L7 7.3L13.1 4Z" fill="#ededed" stroke="#2e2e2e" stroke-width="1"/></svg>
<svg style="left:225px;top:618.5px" width="9" height="9" viewBox="0 0 9 9"><rect x="0.5" y="0.5" width="8" height="8" rx="1.2" fill="#ececec" stroke="#989898"/><path d="M2 4.5H7" stroke="#4662c4" stroke-width="1.1"/><path d="M4.5 2V7" stroke="#4662c4" stroke-width="1.1"/></svg>
<div class="b" style="left:234px;top:623px;width:4px;height:1px;background:repeating-linear-gradient(90deg,#7d7d7d 0 1px,transparent 1px 2px)"></div>
<svg style="left:237.6px;top:616px" width="14" height="14" viewBox="0 0 14 14"><path d="M0.8 6.8L7 10.2L13.2 6.8" fill="none" stroke="#f0683c" stroke-width="1.1"/><path d="M0.8 9.3L7 12.7L13.2 9.3" fill="none" stroke="#f0683c" stroke-width="1.1"/><path d="M7 0.7L0.9 4L7 7.3L13.1 4Z" fill="#ededed" stroke="#2e2e2e" stroke-width="1"/></svg>
<svg style="left:225px;top:638.5px" width="9" height="9" viewBox="0 0 9 9"><rect x="0.5" y="0.5" width="8" height="8" rx="1.2" fill="#ececec" stroke="#989898"/><path d="M2 4.5H7" stroke="#4662c4" stroke-width="1.1"/><path d="M4.5 2V7" stroke="#4662c4" stroke-width="1.1"/></svg>
<div class="b" style="left:234px;top:643px;width:4px;height:1px;background:repeating-linear-gradient(90deg,#7d7d7d 0 1px,transparent 1px 2px)"></div>
<svg style="left:237.6px;top:636px" width="14" height="14" viewBox="0 0 14 14"><path d="M0.8 6.8L7 10.2L13.2 6.8" fill="none" stroke="#f0683c" stroke-width="1.1"/><path d="M0.8 9.3L7 12.7L13.2 9.3" fill="none" stroke="#f0683c" stroke-width="1.1"/><path d="M7 0.7L0.9 4L7 7.3L13.1 4Z" fill="#ededed" stroke="#2e2e2e" stroke-width="1"/></svg>
<div class="b" style="left:230px;top:663px;width:8px;height:1px;background:repeating-linear-gradient(90deg,#7d7d7d 0 1px,transparent 1px 2px)"></div>
<svg style="left:237.6px;top:656px" width="14" height="14" viewBox="0 0 14 14"><path d="M0.8 6.8L7 10.2L13.2 6.8" fill="none" stroke="#f0683c" stroke-width="1.1"/><path d="M0.8 9.3L7 12.7L13.2 9.3" fill="none" stroke="#f0683c" stroke-width="1.1"/><path d="M7 0.7L0.9 4L7 7.3L13.1 4Z" fill="#ededed" stroke="#2e2e2e" stroke-width="1"/></svg>
<div class="b" style="left:230px;top:683px;width:8px;height:1px;background:repeating-linear-gradient(90deg,#7d7d7d 0 1px,transparent 1px 2px)"></div>
<svg style="left:237.6px;top:676px" width="14" height="14" viewBox="0 0 14 14"><path d="M0.8 6.8L7 10.2L13.2 6.8" fill="none" stroke="#f0683c" stroke-width="1.1"/><path d="M0.8 9.3L7 12.7L13.2 9.3" fill="none" stroke="#f0683c" stroke-width="1.1"/><path d="M7 0.7L0.9 4L7 7.3L13.1 4Z" fill="#ededed" stroke="#2e2e2e" stroke-width="1"/></svg>
<div class="b" style="left:230px;top:703px;width:8px;height:1px;background:repeating-linear-gradient(90deg,#7d7d7d 0 1px,transparent 1px 2px)"></div>
<svg style="left:237.6px;top:696px" width="14" height="14" viewBox="0 0 14 14"><path d="M0.8 6.8L7 10.2L13.2 6.8" fill="none" stroke="#f0683c" stroke-width="1.1"/><path d="M0.8 9.3L7 12.7L13.2 9.3" fill="none" stroke="#f0683c" stroke-width="1.1"/><path d="M7 0.7L0.9 4L7 7.3L13.1 4Z" fill="#ededed" stroke="#2e2e2e" stroke-width="1"/></svg>
<div class="b" style="left:187px;top:755px;width:321px;height:9px;background:#f0f0f0"></div>
<div class="b" style="left:205px;top:755px;width:236px;height:9px;background:#cdcdcd"></div>
<svg style="left:192px;top:758.5px" width="6" height="8" viewBox="0 0 6 8"><path d="M5 0.5L1 4L5 7.5" fill="none" stroke="#444" stroke-width="1.4"/></svg>
<svg style="left:496px;top:758.5px" width="6" height="8" viewBox="0 0 6 8"><path d="M1 0.5L5 4L1 7.5" fill="none" stroke="#444" stroke-width="1.4"/></svg>
<div class="tab" style="left:521px;top:139px;width:43px;height:24px;background:#fff;"></div>
<div class="a " style="left:529.50px;top:146.60px;font-size:12.6px;color:#1d53b4">内容</div>
<div class="tab" style="left:567px;top:139px;width:43px;height:24px;"></div>
<div class="a " style="left:574.80px;top:146.60px;font-size:12.6px;color:#111">文档</div>
<div class="tab" style="left:613px;top:139px;width:42px;height:24px;"></div>
<div class="a " style="left:621.00px;top:146.60px;font-size:12.6px;color:#111">关联</div>
<div class="tab" style="left:659px;top:139px;width:42px;height:24px;"></div>
<div class="a " style="left:666.80px;top:146.60px;font-size:12.6px;color:#111">版本</div>
<div class="tab" style="left:705px;top:139px;width:67px;height:24px;"></div>
<div class="a " style="left:712.50px;top:146.60px;font-size:12.6px;color:#111">签审历史</div>
<div class="b" style="left:518px;top:163px;width:850px;height:227px;border:1px solid #5e5e5e;border-bottom:1px solid #dcdcdc;border-right:none;background:#fff;box-shadow:inset 1px 1px 0 #a4a4a4"></div>
<div class="a ser" style="right:744.00px;top:174.85px;font-size:12.5px;color:#111">车间<span class="nx" style="transform:scaleX(1.872);margin-right:3.03px">:</span></div>
<div class="inp" style="left:620px;top:169px;width:250px;height:21px;"></div>
<div class="a ser" style="left:623.20px;top:172.05px;font-size:12.5px;color:#111">桥壳二车间</div>
<div class="a ser" style="right:744.00px;top:206.68px;font-size:12.5px;font-weight:bold;letter-spacing:1px;color:#111"><span class="nx" style="transform:scaleX(1.040);margin-right:0.25px">*</span>零部件代号<span class="nx" style="transform:scaleX(1.562);margin-right:2.34px">:</span></div>
<div class="inp" style="left:620px;top:201px;width:250px;height:21px;"></div>
<div class="a ser" style="left:623.20px;top:203.88px;font-size:12.5px;color:#111"><span class="nx" style="transform:scaleX(1.031);margin-right:2.56px">2401010-K4500</span></div>
<div class="a ser" style="right:744.00px;top:238.51px;font-size:12.5px;color:#111">生效日期<span class="nx" style="transform:scaleX(1.872);margin-right:3.03px">:</span></div>
<div class="inp" style="left:620px;top:233px;width:250px;height:21px;"></div>
<div class="a ser" style="left:623.20px;top:235.71px;font-size:12.5px;color:#111"><span class="nx" style="transform:scaleX(1.114);margin-right:6.67px">2021-06-24</span></div>
<div class="a ser" style="right:744.00px;top:270.34px;font-size:12.5px;color:#111">产品文号<span class="nx" style="transform:scaleX(1.872);margin-right:3.03px">:</span></div>
<div class="inp" style="left:620px;top:265px;width:250px;height:21px;"></div>
<div class="a ser" style="left:623.20px;top:267.54px;font-size:12.5px;color:#111"><span class="nx" style="transform:scaleX(1.025);margin-right:2.36px">51E201601120099</span></div>
<div class="a ser" style="right:744.00px;top:302.17px;font-size:12.5px;color:#111">阶段状态<span class="nx" style="transform:scaleX(1.872);margin-right:3.03px">:</span></div>
<div class="inp" style="left:620px;top:297px;width:250px;height:21px;"></div>
<div class="a ser" style="right:744.00px;top:334.00px;font-size:12.5px;color:#111">所属基本型<span class="nx" style="transform:scaleX(1.872);margin-right:3.03px">:</span></div>
<div class="inp" style="left:620px;top:328px;width:250px;height:21px;"></div>
<div class="a ser" style="right:744.00px;top:365.83px;font-size:12.5px;color:#111">毛坯实际重<span class="nx" style="transform:scaleX(0.906);margin-right:-2.03px">KG:</span></div>
<div class="inp" style="left:620px;top:360px;width:250px;height:21px;"></div>
<div class="a ser" style="right:392.00px;top:174.85px;font-size:12.5px;color:#111">加工阶段<span class="nx" style="transform:scaleX(1.872);margin-right:3.03px">:</span></div>
<div class="inp" style="left:972px;top:169px;width:250px;height:21px;"></div>
<div class="a ser" style="left:975.20px;top:172.05px;font-size:12.5px;color:#111">零件工艺</div>
<div class="a ser" style="right:392.00px;top:206.68px;font-size:12.5px;color:#111">文件编号<span class="nx" style="transform:scaleX(1.872);margin-right:3.03px">:</span></div>
<div class="inp" style="left:972px;top:201px;width:250px;height:21px;"></div>
<div class="a ser" style="left:975.20px;top:203.88px;font-size:12.5px;color:#111"><span class="nx" style="transform:scaleX(1.060);margin-right:4.39px">CP-2022-0377</span></div>
<div class="a ser" style="right:392.00px;top:238.51px;font-size:12.5px;color:#111">工厂<span class="nx" style="transform:scaleX(1.872);margin-right:3.03px">:</span></div>
<div class="inp" style="left:972px;top:233px;width:250px;height:21px;"></div>
<div class="a ser" style="left:975.20px;top:235.71px;font-size:12.5px;color:#111"><span class="nx" style="transform:scaleX(0.960);margin-right:-1.09px">592B</span></div>
<div class="a ser" style="right:392.00px;top:270.34px;font-size:12.5px;color:#111">零件类型<span class="nx" style="transform:scaleX(1.872);margin-right:3.03px">:</span></div>
<div class="inp" style="left:972px;top:265px;width:250px;height:21px;"></div>
<div class="a ser" style="left:975.20px;top:267.54px;font-size:12.5px;color:#111">桥壳总成</div>
<div class="a ser" style="right:392.00px;top:302.17px;font-size:12.5px;color:#111">材料规格<span class="nx" style="transform:scaleX(1.872);margin-right:3.03px">:</span></div>
<div class="inp" style="left:972px;top:297px;width:250px;height:21px;"></div>
<div class="a ser" style="right:392.00px;top:334.00px;font-size:12.5px;color:#111">毛坯种类<span class="nx" style="transform:scaleX(1.872);margin-right:3.03px">:</span></div>
<div class="inp" style="left:972px;top:328px;width:250px;height:21px;"></div>
<div class="a ser" style="right:392.00px;top:365.83px;font-size:12.5px;color:#111">工时合计<span class="nx" style="transform:scaleX(1.872);margin-right:3.03px">:</span></div>
<div class="inp" style="left:972px;top:360px;width:250px;height:21px;"></div>
<div class="a ser" style="right:41.00px;top:174.85px;font-size:12.5px;color:#111">零部件名称<span class="nx" style="transform:scaleX(1.872);margin-right:3.03px">:</span></div>
<div class="inp" style="left:1323px;top:169px;width:250px;height:21px;"></div>
<div class="a ser" style="left:1326.20px;top:172.05px;font-size:12.5px;color:#111">后桥壳</div>
<div class="a ser" style="right:41.00px;top:206.68px;font-size:12.5px;color:#111">生产线<span class="nx" style="transform:scaleX(1.872);margin-right:3.03px">:</span></div>
<div class="inp" style="left:1323px;top:201px;width:250px;height:21px;"></div>
<div class="a ser" style="left:1326.20px;top:203.88px;font-size:12.5px;color:#111">桥壳二</div>
<div class="a ser" style="right:41.00px;top:238.51px;font-size:12.5px;color:#111">工厂地址<span class="nx" style="transform:scaleX(1.872);margin-right:3.03px">:</span></div>
<div class="inp" style="left:1323px;top:233px;width:250px;height:21px;"></div>
<div class="a ser" style="left:1326.20px;top:235.71px;font-size:12.5px;color:#111">襄阳市</div>
<div class="a ser" style="right:41.00px;top:270.34px;font-size:12.5px;color:#111">工艺种类<span class="nx" style="transform:scaleX(1.872);margin-right:3.03px">:</span></div>
<div class="inp" style="left:1323px;top:265px;width:250px;height:21px;"></div>
<div class="a ser" style="left:1326.20px;top:267.54px;font-size:12.5px;color:#111">加工</div>
<div class="a ser" style="right:41.00px;top:302.17px;font-size:12.5px;color:#111">材料标准<span class="nx" style="transform:scaleX(1.872);margin-right:3.03px">:</span></div>
<div class="inp" style="left:1323px;top:297px;width:250px;height:21px;"></div>
<div class="a ser" style="right:41.00px;top:334.00px;font-size:12.5px;color:#111">毛坯硬度<span class="nx" style="transform:scaleX(1.872);margin-right:3.03px">:</span></div>
<div class="inp" style="left:1323px;top:328px;width:250px;height:21px;"></div>
<div class="a ser" style="right:41.00px;top:365.83px;font-size:12.5px;color:#111">成品实际重<span class="nx" style="transform:scaleX(0.906);margin-right:-2.03px">KG:</span></div>
<div class="inp" style="left:1323px;top:360px;width:250px;height:21px;"></div>
<div class="b" style="left:517px;top:391px;width:503px;height:6px;background:#f5f5f5"></div>
<div class="b" style="left:1094px;top:391px;width:267px;height:6px;background:#f5f5f5"></div>
<svg style="left:1052px;top:391px" width="9" height="5" viewBox="0 0 9 5"><path d="M0 5L4.5 0L9 5Z" fill="#9a9a9a"/></svg>
<div class="tab" style="left:521px;top:406px;width:105px;height:25px;background:#fff;"></div>
<div class="a " style="left:529.00px;top:413.73px;font-size:12.55px;color:#1d53b4">产品过程流程图</div>
<div class="tab" style="left:629px;top:406px;width:93px;height:24px;"></div>
<div class="a " style="left:637.60px;top:413.73px;font-size:12.55px;color:#111">锥齿轮参数表</div>
<div class="tab" style="left:725px;top:406px;width:81px;height:24px;"></div>
<div class="a " style="left:734.00px;top:413.73px;font-size:12.55px;color:#111">齿轮工时表</div>
<div class="tab" style="left:809px;top:406px;width:81px;height:24px;"></div>
<div class="a " style="left:817.00px;top:413.73px;font-size:12.55px;color:#111">平面布置图</div>
<div class="b" style="left:518px;top:430px;width:850px;height:340px;border:1px solid #1e1e1e;border-right:none;border-bottom:none;background:#fff;box-shadow:inset 1px 1px 0 #8a8a8a"></div>
<div class="b" style="left:565px;top:432px;width:50px;height:19px;background:#bfdcf8"></div>
<div class="b" style="left:519.6px;top:451px;width:45px;height:26.5px;background:#bcdbf8"></div>
<div class="b" style="left:565px;top:451px;width:800px;height:26.5px;background:#e8eef9"></div>
<div class="a ser" style="left:565px;width:49.5px;text-align:center;top:435.25px;font-size:12.5px;color:#111">序号</div>
<div class="a ser" style="left:622.50px;top:435.25px;font-size:12.5px;color:#111">过程流程<span class="nx" style="transform:scaleX(2.080);margin-right:10.12px">...</span></div>
<div class="a ser" style="left:698px;width:133.5px;text-align:center;top:435.25px;font-size:12.5px;color:#111">人数</div>
<div class="a ser" style="left:831.5px;width:133.5px;text-align:center;top:435.25px;font-size:12.5px;color:#111">过程流程</div>
<div class="a ser" style="left:965px;width:133.5px;text-align:center;top:435.25px;font-size:12.5px;color:#111">搬运方式</div>
<div class="a ser" style="left:1098.5px;width:133.5px;text-align:center;top:435.25px;font-size:12.5px;color:#111">设备名称</div>
<div class="a ser" style="left:1232px;width:133.5px;text-align:center;top:435.25px;font-size:12.5px;color:#111">设备型号</div>
<div class="b" style="left:565px;top:451px;width:800px;height:1px;background:#a9a9a9"></div>
<div class="b" style="left:520px;top:451px;width:45px;height:1px;background:repeating-linear-gradient(90deg,#d0d0d0 0 2px,transparent 2px 3px)"></div>
<div class="b" style="left:565px;top:478px;width:800px;height:1px;background:#a9a9a9"></div>
<div class="b" style="left:520px;top:478px;width:45px;height:1px;background:repeating-linear-gradient(90deg,#d0d0d0 0 2px,transparent 2px 3px)"></div>
<div class="b" style="left:565px;top:504px;width:800px;height:1px;background:#a9a9a9"></div>
<div class="b" style="left:520px;top:504px;width:45px;height:1px;background:repeating-linear-gradient(90deg,#d0d0d0 0 2px,transparent 2px 3px)"></div>
<div class="b" style="left:565px;top:531px;width:800px;height:1px;background:#a9a9a9"></div>
<div class="b" style="left:520px;top:531px;width:45px;height:1px;background:repeating-linear-gradient(90deg,#d0d0d0 0 2px,transparent 2px 3px)"></div>
<div class="b" style="left:565px;top:558px;width:800px;height:1px;background:#a9a9a9"></div>
<div class="b" style="left:520px;top:558px;width:45px;height:1px;background:repeating-linear-gradient(90deg,#d0d0d0 0 2px,transparent 2px 3px)"></div>
<div class="b" style="left:565px;top:585px;width:800px;height:1px;background:#a9a9a9"></div>
<div class="b" style="left:520px;top:585px;width:45px;height:1px;background:repeating-linear-gradient(90deg,#d0d0d0 0 2px,transparent 2px 3px)"></div>
<div class="b" style="left:565px;top:611px;width:800px;height:1px;background:#a9a9a9"></div>
<div class="b" style="left:520px;top:611px;width:45px;height:1px;background:repeating-linear-gradient(90deg,#d0d0d0 0 2px,transparent 2px 3px)"></div>
<div class="b" style="left:565px;top:638px;width:800px;height:1px;background:#a9a9a9"></div>
<div class="b" style="left:520px;top:638px;width:45px;height:1px;background:repeating-linear-gradient(90deg,#d0d0d0 0 2px,transparent 2px 3px)"></div>
<div class="b" style="left:565px;top:665px;width:800px;height:1px;background:#a9a9a9"></div>
<div class="b" style="left:520px;top:665px;width:45px;height:1px;background:repeating-linear-gradient(90deg,#d0d0d0 0 2px,transparent 2px 3px)"></div>
<div class="b" style="left:565px;top:692px;width:800px;height:1px;background:#a9a9a9"></div>
<div class="b" style="left:520px;top:692px;width:45px;height:1px;background:repeating-linear-gradient(90deg,#d0d0d0 0 2px,transparent 2px 3px)"></div>
<div class="b" style="left:565px;top:718px;width:800px;height:1px;background:#a9a9a9"></div>
<div class="b" style="left:520px;top:718px;width:45px;height:1px;background:repeating-linear-gradient(90deg,#d0d0d0 0 2px,transparent 2px 3px)"></div>
<div class="b" style="left:565px;top:745px;width:800px;height:1px;background:#a9a9a9"></div>
<div class="b" style="left:520px;top:745px;width:45px;height:1px;background:repeating-linear-gradient(90deg,#d0d0d0 0 2px,transparent 2px 3px)"></div>
<div class="b" style="left:565px;top:772px;width:800px;height:1px;background:#a9a9a9"></div>
<div class="b" style="left:520px;top:772px;width:45px;height:1px;background:repeating-linear-gradient(90deg,#d0d0d0 0 2px,transparent 2px 3px)"></div>
<div class="b" style="left:564px;top:451px;width:1px;height:320px;background:#a9a9a9"></div>
<div class="b" style="left:614px;top:451px;width:1px;height:320px;background:#a9a9a9"></div>
<div class="b" style="left:614px;top:432px;width:1px;height:19px;background:#e2e2e2"></div>
<div class="b" style="left:698px;top:451px;width:1px;height:320px;background:#a9a9a9"></div>
<div class="b" style="left:698px;top:432px;width:1px;height:19px;background:#e2e2e2"></div>
<div class="b" style="left:832px;top:451px;width:1px;height:320px;background:#a9a9a9"></div>
<div class="b" style="left:832px;top:432px;width:1px;height:19px;background:#e2e2e2"></div>
<div class="b" style="left:965px;top:451px;width:1px;height:320px;background:#a9a9a9"></div>
<div class="b" style="left:965px;top:432px;width:1px;height:19px;background:#e2e2e2"></div>
<div class="b" style="left:1099px;top:451px;width:1px;height:320px;background:#a9a9a9"></div>
<div class="b" style="left:1099px;top:432px;width:1px;height:19px;background:#e2e2e2"></div>
<div class="b" style="left:1232px;top:451px;width:1px;height:320px;background:#a9a9a9"></div>
<div class="b" style="left:1232px;top:432px;width:1px;height:19px;background:#e2e2e2"></div>
<div class="b" style="left:564px;top:432px;width:1px;height:19px;background:#e2e2e2"></div>
<div class="a lat" style="right:806.50px;top:460.55px;font-size:12.5px;color:#111">1</div>
<div class="a ser" style="left:567.10px;top:458.55px;font-size:12.5px;color:#1d4fae"><span class="nx" style="transform:scaleX(1.040);margin-right:0.50px">10</span></div>
<div class="a ser" style="left:617.80px;top:459.45px;font-size:12.5px;color:#1d4fae">壳体领用<span class="nx" style="transform:scaleX(2.080);margin-right:10.12px">...</span></div>
<svg style="left:836px;top:460px" width="11" height="7" viewBox="0 0 11 7"><path d="M0 3.5H7" stroke="#1f3f9f" stroke-width="1.2"/><path d="M6 1L10.5 3.5L6 6Z" fill="#1f3f9f"/></svg>
<div class="a lat" style="right:806.50px;top:487.30px;font-size:12.5px;color:#111">2</div>
<div class="a ser" style="left:567.10px;top:485.30px;font-size:12.5px;color:#111"><span class="nx" style="transform:scaleX(1.040);margin-right:0.50px">20</span></div>
<div class="a ser" style="left:617.80px;top:486.20px;font-size:12.5px;color:#111">定位焊后<span class="nx" style="transform:scaleX(2.080);margin-right:10.12px">...</span></div>
<div class="a ser" style="left:701.00px;top:485.30px;font-size:12.5px;color:#111"><span class="nx" style="transform:scaleX(1.040);margin-right:0.25px">1</span></div>
<div class="b" style="left:836.5px;top:486px;width:9.5px;height:9.5px;border:1px solid #222;background:#fff"></div>
<div class="a ser" style="left:968.50px;top:486.20px;font-size:12.5px;color:#111">行车、辊道</div>
<div class="a ser" style="left:1102.00px;top:486.20px;font-size:12.5px;color:#111">半自动<span class="nx" style="transform:scaleX(0.826);margin-right:-4.11px">CO2</span>焊机</div>
<div class="a ser" style="left:1234.50px;top:485.30px;font-size:12.5px;color:#111"><span class="nx" style="transform:scaleX(0.900);margin-right:-3.61px">KR500</span></div>
<div class="a lat" style="right:806.50px;top:514.05px;font-size:12.5px;color:#111">3</div>
<div class="a ser" style="left:567.10px;top:512.05px;font-size:12.5px;color:#111"><span class="nx" style="transform:scaleX(1.040);margin-right:0.50px">30</span></div>
<div class="a ser" style="left:617.80px;top:512.95px;font-size:12.5px;color:#111">后盖内侧<span class="nx" style="transform:scaleX(2.080);margin-right:10.12px">...</span></div>
<div class="a ser" style="left:701.00px;top:512.05px;font-size:12.5px;color:#111"><span class="nx" style="transform:scaleX(1.040);margin-right:0.25px">1</span></div>
<div class="b" style="left:836.5px;top:513px;width:9.5px;height:9.5px;border:1px solid #222;background:#fff"></div>
<div class="a ser" style="left:968.50px;top:512.95px;font-size:12.5px;color:#111">行车、辊道</div>
<div class="a ser" style="left:1102.00px;top:512.95px;font-size:12.5px;color:#111">内侧焊机器人</div>
<div class="a lat" style="right:806.50px;top:540.80px;font-size:12.5px;color:#111">4</div>
<div class="a ser" style="left:567.10px;top:538.80px;font-size:12.5px;color:#111"><span class="nx" style="transform:scaleX(1.040);margin-right:0.50px">40</span></div>
<div class="a ser" style="left:617.80px;top:539.70px;font-size:12.5px;color:#111">焊接后盖<span class="nx" style="transform:scaleX(2.080);margin-right:10.12px">...</span></div>
<div class="b" style="left:836.5px;top:540px;width:9.5px;height:9.5px;border:1px solid #222;background:#fff"></div>
<div class="a lat" style="right:806.50px;top:567.55px;font-size:12.5px;color:#111">5</div>
<div class="a ser" style="left:567.10px;top:565.55px;font-size:12.5px;color:#111"><span class="nx" style="transform:scaleX(1.040);margin-right:0.50px">50</span></div>
<div class="a ser" style="left:617.80px;top:566.45px;font-size:12.5px;color:#111">定位焊附件</div>
<div class="a ser" style="left:701.00px;top:565.55px;font-size:12.5px;color:#111"><span class="nx" style="transform:scaleX(1.040);margin-right:0.25px">1</span></div>
<div class="b" style="left:836.5px;top:566px;width:9.5px;height:9.5px;border:1px solid #222;background:#fff"></div>
<div class="a ser" style="left:968.50px;top:566.45px;font-size:12.5px;color:#111">行车、辊道</div>
<div class="a ser" style="left:1102.00px;top:566.45px;font-size:12.5px;color:#111">半自动<span class="nx" style="transform:scaleX(0.826);margin-right:-4.11px">CO2</span>焊机</div>
<div class="a ser" style="left:1234.50px;top:565.55px;font-size:12.5px;color:#111"><span class="nx" style="transform:scaleX(0.900);margin-right:-3.61px">KR500</span></div>
<div class="a lat" style="right:806.50px;top:594.30px;font-size:12.5px;color:#111">6</div>
<div class="a ser" style="left:567.10px;top:592.30px;font-size:12.5px;color:#111"><span class="nx" style="transform:scaleX(1.040);margin-right:0.50px">60</span></div>
<div class="a ser" style="left:617.80px;top:593.20px;font-size:12.5px;color:#111">焊接附件</div>
<div class="a ser" style="left:701.00px;top:592.30px;font-size:12.5px;color:#111"><span class="nx" style="transform:scaleX(1.040);margin-right:0.25px">1</span></div>
<div class="b" style="left:836.5px;top:593px;width:9.5px;height:9.5px;border:1px solid #222;background:#fff"></div>
<div class="a ser" style="left:968.50px;top:593.20px;font-size:12.5px;color:#111">行车、辊道</div>
<div class="a ser" style="left:1102.00px;top:593.20px;font-size:12.5px;color:#111">半自动<span class="nx" style="transform:scaleX(0.826);margin-right:-4.11px">CO2</span>焊机</div>
<div class="a ser" style="left:1234.50px;top:592.30px;font-size:12.5px;color:#111"><span class="nx" style="transform:scaleX(0.900);margin-right:-3.61px">KR500</span></div>
<div class="a lat" style="right:806.50px;top:621.05px;font-size:12.5px;color:#111">7</div>
<div class="a ser" style="left:567.10px;top:619.05px;font-size:12.5px;color:#111"><span class="nx" style="transform:scaleX(1.040);margin-right:0.50px">70</span></div>
<div class="a ser" style="left:617.80px;top:619.95px;font-size:12.5px;color:#111">定位焊法<span class="nx" style="transform:scaleX(2.080);margin-right:10.12px">...</span></div>
<div class="a ser" style="left:701.00px;top:619.05px;font-size:12.5px;color:#111"><span class="nx" style="transform:scaleX(1.040);margin-right:0.25px">2</span></div>
<div class="b" style="left:836.5px;top:620px;width:9.5px;height:9.5px;border:1px solid #222;background:#fff"></div>
<div class="a ser" style="left:968.50px;top:619.95px;font-size:12.5px;color:#111">行车、辊道</div>
<div class="a ser" style="left:1102.00px;top:619.95px;font-size:12.5px;color:#111">焊接机器人</div>
<div class="a ser" style="left:1234.50px;top:619.05px;font-size:12.5px;color:#111"><span class="nx" style="transform:scaleX(0.950);margin-right:-2.41px">AII-MV6</span></div>
<div class="a lat" style="right:806.50px;top:647.80px;font-size:12.5px;color:#111">8</div>
<div class="a ser" style="left:567.10px;top:645.80px;font-size:12.5px;color:#111"><span class="nx" style="transform:scaleX(1.040);margin-right:0.50px">80</span></div>
<div class="a ser" style="left:617.80px;top:646.70px;font-size:12.5px;color:#111">预热<span class="nx" style="transform:scaleX(1.562);margin-right:2.34px">(</span>按<span class="nx" style="transform:scaleX(1.664);margin-right:10.38px">5...</span></div>
<div class="b" style="left:836.5px;top:647px;width:9.5px;height:9.5px;border:1px solid #222;background:#fff"></div>
<div class="a lat" style="right:806.50px;top:674.55px;font-size:12.5px;color:#111">9</div>
<div class="a ser" style="left:567.10px;top:672.55px;font-size:12.5px;color:#111"><span class="nx" style="transform:scaleX(1.040);margin-right:0.50px">90</span></div>
<div class="a ser" style="left:617.80px;top:673.45px;font-size:12.5px;color:#111">焊接轴管<span class="nx" style="transform:scaleX(2.080);margin-right:10.12px">...</span></div>
<div class="b" style="left:836.5px;top:674px;width:9.5px;height:9.5px;border:1px solid #222;background:#fff"></div>
<div class="a lat" style="right:806.50px;top:701.30px;font-size:12.5px;color:#111">10</div>
<div class="a ser" style="left:567.10px;top:699.30px;font-size:12.5px;color:#111"><span class="nx" style="transform:scaleX(1.040);margin-right:0.75px">100</span></div>
<div class="a ser" style="left:617.80px;top:700.20px;font-size:12.5px;color:#111">焊接法兰<span class="nx" style="transform:scaleX(2.080);margin-right:10.12px">...</span></div>
<div class="b" style="left:836.5px;top:700px;width:9.5px;height:9.5px;border:1px solid #222;background:#fff"></div>
<div class="a lat" style="right:806.50px;top:728.05px;font-size:12.5px;color:#111">11</div>
<div class="a ser" style="left:567.10px;top:726.05px;font-size:12.5px;color:#111"><span class="nx" style="transform:scaleX(1.040);margin-right:0.75px">110</span></div>
<div class="a ser" style="left:617.80px;top:726.95px;font-size:12.5px;color:#111">校正（按<span class="nx" style="transform:scaleX(1.664);margin-right:10.38px">5...</span></div>
<div class="b" style="left:836.5px;top:727px;width:9.5px;height:9.5px;border:1px solid #222;background:#fff"></div>
<div class="a lat" style="right:806.50px;top:754.80px;font-size:12.5px;color:#111">12</div>
<div class="a ser" style="left:567.10px;top:752.80px;font-size:12.5px;color:#111"><span class="nx" style="transform:scaleX(1.101);margin-right:2.39px">120J</span></div>
<div class="a ser" style="left:617.80px;top:753.70px;font-size:12.5px;color:#111">环焊缝检<span class="nx" style="transform:scaleX(2.080);margin-right:10.12px">...</span></div>
<svg style="left:835px;top:752px" width="12" height="12" viewBox="0 0 12 12"><path d="M6 0.7L11.3 6L6 11.3L0.7 6Z" fill="#fff" stroke="#222" stroke-width="1"/></svg>
<svg style="left:524.8px;top:460.3px" width="6" height="11.3" viewBox="0 0 6 11.3"><path d="M0 0L6 5.65L0 11.3Z" fill="#3a3a3a"/></svg>
<div class="b" style="left:519.6px;top:758px;width:845px;height:6px;background:#f0f0f0"></div>
<div class="b" style="left:536.3px;top:758px;width:336px;height:6px;background:#cdcdcd"></div>
<svg style="left:525px;top:759.5px" width="5" height="7" viewBox="0 0 5 7"><path d="M4.5 0.5L1 3.5L4.5 6.5" fill="none" stroke="#444" stroke-width="1.2"/></svg>
<svg style="left:512.8px;top:449.6px" width="5.2" height="7" viewBox="0 0 5.2 7"><path d="M5.2 0L0 3.5L5.2 7Z" fill="#a8a8a8"/></svg>
</div></body></html>
